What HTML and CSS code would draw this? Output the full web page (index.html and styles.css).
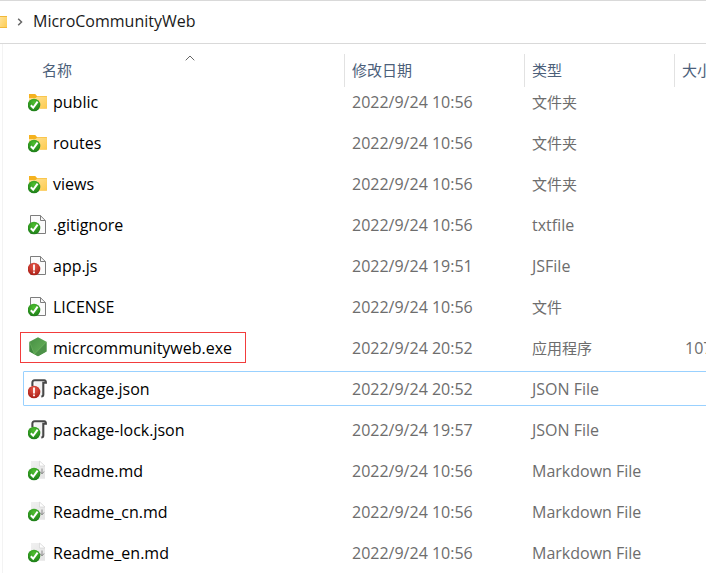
FILE: index.html
```
<!DOCTYPE html>
<html lang="zh-CN">
<head>
<meta charset="utf-8">
<title>MicroCommunityWeb</title>
<link rel="stylesheet" href="styles.css">
</head>
<body>
<svg class="defs" aria-hidden="true">
  <defs>
    <linearGradient id="gFolder" x1="0" y1="0" x2="1" y2="1"><stop offset="0" stop-color="#ffe39a"/><stop offset="1" stop-color="#fdcb4f"/></linearGradient>
    <radialGradient id="gOk" cx=".5" cy=".3" r=".7"><stop offset="0" stop-color="#4fc02f"/><stop offset="1" stop-color="#1c7d18"/></radialGradient>
    <radialGradient id="gBad" cx=".5" cy=".3" r=".7"><stop offset="0" stop-color="#e8594a"/><stop offset="1" stop-color="#a91e16"/></radialGradient>
    <linearGradient id="gMd" x1="0" y1="0" x2="1" y2="1"><stop offset="0" stop-color="#f0f0f0"/><stop offset="1" stop-color="#e4e4e4"/></linearGradient>
    <linearGradient id="gNode" x1="0" y1="0" x2="1" y2="1"><stop offset="0" stop-color="#468f44"/><stop offset="1" stop-color="#6bb55c"/></linearGradient>
  </defs>
  <symbol id="ok" viewBox="0 0 20 22">
    <circle cx="6" cy="14" r="6.300" fill="url(#gOk)"/>
    <path d="M2.800 14.300 5.200 16.800 9.600 10.700" fill="none" stroke="#fff" stroke-width="2"/>
  </symbol>
  <symbol id="bad" viewBox="0 0 20 22">
    <circle cx="6" cy="14" r="6.300" fill="url(#gBad)"/>
    <path d="M6 9.500v6M6 16.500v1.800" stroke="#fff" stroke-width="1.800"/>
  </symbol>
  <symbol id="folder" viewBox="0 0 20 22">
    <path d="M1 3h6.200l1.800 2h9.900v12.500H1z" fill="#f5b21f"/>
    <path d="M1 7h6.600L9.400 5.500h9.500v12H1z" fill="url(#gFolder)"/>
  </symbol>
  <symbol id="page" viewBox="0 0 20 22">
    <path d="M2.500 1.500h9.800l5.200 5.200v12.800h-15z" fill="#fbfbfb" stroke="#7d7d7d"/>
    <path d="M12.500 1.500v5h5" fill="none" stroke="#7d7d7d"/>
  </symbol>
  <symbol id="script" viewBox="0 0 20 22">
    <path d="M5.500 3.500h9.800v15H7V5z" fill="#f2f2f2"/>
    <path d="M4.400 8V4.700q0-2.500 2.400-2.500h9.500q1.600 0 1.600 2.600h-2.600V16.500q0 2-2 2" fill="none" stroke="#484848" stroke-width="2.100"/>
  </symbol>
  <symbol id="md" viewBox="0 0 20 22">
    <path d="M3 1h8.500l5.500 5v12.800H3z" fill="url(#gMd)"/>
    <path d="M11.500 1v5H17z" fill="#fff" stroke="#d4d4d4" stroke-width=".7"/>
    <path d="M14 8.500v5m-2-2 2 2.400 2-2.400" fill="none" stroke="#8a8a8a"/>
  </symbol>
  <symbol id="node" viewBox="0 0 20 22">
    <path d="M10 .3 18.500 4.800v9.700L10 19.300 1.500 14.500V4.800z" fill="url(#gNode)"/>
    <path d="M1.500 4.800 6.300 17.200 1.500 14.500z" fill="#3f873f"/>
    <path d="M6.300 17.200 18.500 5v9.500L10 19.300z" fill="#4c9148"/>
    <path d="M1.500 4.800 6.300 17.200 18.500 4.800" fill="none" stroke="#7abd69" stroke-width=".5"/>
  </symbol>
</svg>

<nav class="path-bar" aria-label="路径">
  <svg class="path-folder" viewBox="0 0 7 12" aria-hidden="true"><path d="M0 0h7v12H0z" fill="url(#gFolder)"/><path d="M0 0h7v1H0zM0 11h7v1H0z" fill="#f1b83a"/></svg>
  <svg class="path-arrow" viewBox="0 0 6 8" aria-hidden="true"><path d="M1.200.8 4.500 4 1.200 7.200" fill="none" stroke="#666" stroke-width="1.500"/></svg>
  <a class="path-link" href="#">MicroCommunityWeb</a>
</nav>

<main class="pane">
  <table class="files">
    <colgroup><col class="c-name"><col class="c-date"><col class="c-type"><col class="c-size"></colgroup>
    <thead>
      <tr>
        <th aria-sort="ascending"><button class="sort">名称</button><svg class="sort-mark" viewBox="0 0 10 6" aria-hidden="true"><path d="M.7 5.300 5 1l4.300 4.300" fill="none" stroke="#666"/></svg></th>
        <th><button class="sort">修改日期</button></th>
        <th><button class="sort">类型</button></th>
        <th><button class="sort">大小</button></th>
      </tr>
    </thead>
    <tbody>
      <tr><td><span class="name"><svg class="icon"><use href="#folder"/><use href="#ok"/></svg>public</span></td><td>2022/9/24 10:56</td><td class="zh">文件夹</td><td></td></tr>
      <tr><td><span class="name"><svg class="icon"><use href="#folder"/><use href="#ok"/></svg>routes</span></td><td>2022/9/24 10:56</td><td class="zh">文件夹</td><td></td></tr>
      <tr><td><span class="name"><svg class="icon"><use href="#folder"/><use href="#ok"/></svg>views</span></td><td>2022/9/24 10:56</td><td class="zh">文件夹</td><td></td></tr>
      <tr><td><span class="name"><svg class="icon"><use href="#page"/><use href="#ok"/></svg>.gitignore</span></td><td>2022/9/24 10:56</td><td>txtfile</td><td></td></tr>
      <tr><td><span class="name"><svg class="icon"><use href="#page"/><use href="#bad"/></svg>app.js</span></td><td>2022/9/24 19:51</td><td>JSFile</td><td></td></tr>
      <tr><td><span class="name"><svg class="icon"><use href="#page"/><use href="#ok"/></svg>LICENSE</span></td><td>2022/9/24 10:56</td><td class="zh">文件</td><td></td></tr>
      <tr class="marked"><td><span class="name"><svg class="icon"><use href="#node"/></svg>micrcommunityweb.exe</span></td><td>2022/9/24 20:52</td><td class="zh">应用程序</td><td class="size">107</td></tr>
      <tr class="focused"><td><span class="name"><svg class="icon"><use href="#script"/><use href="#bad"/></svg>package.json</span></td><td>2022/9/24 20:52</td><td>JSON File</td><td></td></tr>
      <tr><td><span class="name"><svg class="icon"><use href="#script"/><use href="#ok"/></svg>package-lock.json</span></td><td>2022/9/24 19:57</td><td>JSON File</td><td></td></tr>
      <tr><td><span class="name"><svg class="icon"><use href="#md"/><use href="#ok"/></svg>Readme.md</span></td><td>2022/9/24 10:56</td><td>Markdown File</td><td></td></tr>
      <tr><td><span class="name"><svg class="icon"><use href="#md"/><use href="#ok"/></svg>Readme_cn.md</span></td><td>2022/9/24 10:56</td><td>Markdown File</td><td></td></tr>
      <tr><td><span class="name"><svg class="icon"><use href="#md"/><use href="#ok"/></svg>Readme_en.md</span></td><td>2022/9/24 10:56</td><td>Markdown File</td><td></td></tr>
    </tbody>
  </table>
</main>
</body>
</html>
```
FILE: styles.css
```
*, ::after { box-sizing: border-box; }

body {
  margin: 0;
  background: #fff;
  color: #000;
  font: 16px/30px "Open Sans", "Noto Sans CJK SC", sans-serif;
  overflow: hidden;
}

.defs { position: absolute; width: 0; height: 0; }

.path-bar {
  display: flex;
  align-items: center;
  height: 44px;
  border-top: 1px solid #d9d9d9;
  border-bottom: 1px solid #d9d9d9;
}
.path-folder { width: 7px; height: 12px; }
.path-arrow { width: 6px; height: 8px; margin: 0 10px; }
.path-link {
  padding-bottom: 2px;
  color: #1a1a1a;
  text-decoration: none;
}

.pane { margin-left: 2px; overflow: hidden; }

.files {
  width: 100%;
  min-width: 792px;
  table-layout: fixed;
  border-collapse: separate;
  border-spacing: 0;
  border-left: 1px solid #f3f3f3;
}
.c-name { width: 342px; }
.c-date { width: 180px; }
.c-type { width: 150px; }

th {
  position: relative;
  height: 43px;
  padding: 10px 0 0;
  font-weight: 400;
  text-align: left;
  vertical-align: top;
}
.sort {
  display: block;
  width: 100%;
  height: 33px;
  padding: 0 7px;
  border: 0;
  border-right: 1px solid #e2e2e2;
  background: none;
  color: #4c607a;
  font: inherit;
  font-size: 15px;
  line-height: 33px;
  text-align: left;
}
th:first-child .sort { padding-left: 39px; }
.sort-mark {
  position: absolute;
  top: 11px;
  left: 182px;
  width: 10px;
  height: 6px;
}

td {
  height: 41px;
  padding: 5px 7px 6px;
  color: #6d6d6d;
  white-space: nowrap;
}
tbody tr:first-child td { height: 36px; padding-top: 0; }
td:first-child { padding-left: 25px; color: #000; }
.zh { font-size: 15px; }
.size { padding-left: 10px; }

.name { display: flex; align-items: center; gap: 5px; }
.icon { width: 20px; height: 22px; }

.marked, .focused { position: relative; }
.marked::after, .focused::after {
  content: "";
  position: absolute;
  pointer-events: none;
}
.marked::after {
  top: 4px;
  bottom: 6px;
  left: 17px;
  width: 226px;
  border: 1px solid #f23c3c;
}
.focused::after {
  top: 2px;
  right: 0;
  bottom: 4px;
  left: 20px;
  border: 1px solid #99d1ff;
  border-radius: 1px;
}
```
